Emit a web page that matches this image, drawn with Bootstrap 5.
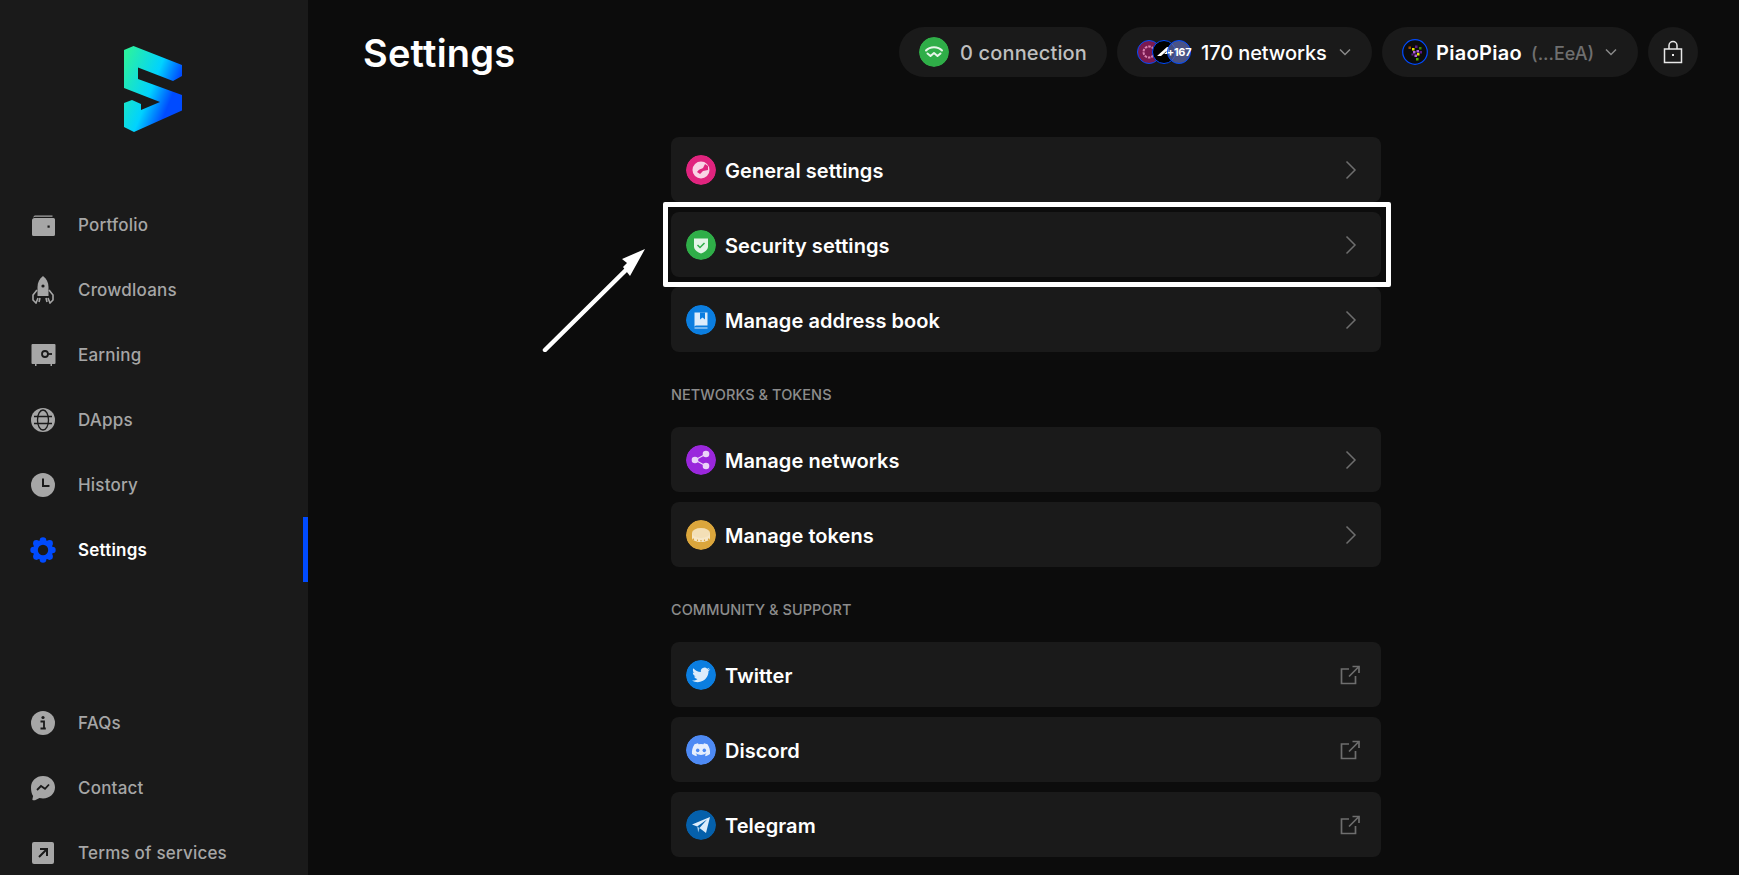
<!DOCTYPE html>
<html lang="en">
<head>
    <meta charset="UTF-8">
    <meta name="viewport" content="width=device-width, initial-scale=1.0">
    <title>Settings</title>

    <!-- Bootstrap CSS -->
    <link href="https://cdn.jsdelivr.net/npm/bootstrap@5.3.0/dist/css/bootstrap.min.css" rel="stylesheet">
    <script src="https://cdn.jsdelivr.net/npm/bootstrap@5.3.0/dist/js/bootstrap.bundle.min.js"></script>

    <style>
        html, body {
            height: 100%;
            overflow: hidden;
        }
        body {
            background-color: #0c0c0c;
            font-family: "Inter", "Noto Sans", sans-serif;
            color: #fff;
        }
        .app-side {
            width: 308px;
            height: 875px;
            flex: none;
            background-color: #1a1a1a;
        }
        .logo-box {
            height: 192px;
            padding: 46px 0 0 124px;
        }
        .side-link {
            height: 65px;
            padding-left: 30px;
            gap: 22px;
            font-size: 17px;
            font-weight: 500;
            letter-spacing: 0.2px;
            color: #a6a6a6;
            text-decoration: none;
        }
        .side-link span {
            padding-top: 2px;
        }
        .side-link.is-active {
            color: #fff;
            font-weight: 600;
            border-right: 5px solid #004bff;
        }
        .side-bottom {
            margin-top: 108px;
        }
        .app-main {
            padding-left: 5px;
            min-width: 0;
        }
        .top-bar {
            padding: 27px 41px 0 50px;
            height: 77px;
        }
        .page-name {
            font-size: 38px;
            font-weight: 600;
            letter-spacing: 0.2px;
            margin: 0;
            padding-top: 4px;
        }
        .stack-10 {
            gap: 10px;
        }
        .pill-btn {
            height: 50px;
            border-radius: 25px;
            background-color: #1a1a1a;
            font-size: 20px;
            font-weight: 500;
            white-space: nowrap;
        }
        .pill-btn span.pill-text {
            padding-top: 2px;
        }
        .pill-conn {
            width: 208px;
            padding-left: 20px;
            gap: 11px;
            color: #bfbfbf;
            letter-spacing: 0.15px;
        }
        .pill-net {
            width: 255px;
            padding-left: 20px;
            letter-spacing: -0.1px;
        }
        .pill-acc {
            width: 256px;
            padding-left: 20px;
            font-weight: 600;
            letter-spacing: 0.3px;
        }
        .pill-lock {
            width: 50px;
            justify-content: center;
        }
        .pill-chev {
            margin-right: 20px;
        }
        .addr-short {
            color: #6f6f6f;
            font-size: 18px;
            font-weight: 500;
            margin-left: 9px;
            padding-top: 2px;
            letter-spacing: 0;
        }
        .net-dot {
            width: 24px;
            height: 24px;
            border-radius: 50%;
            border: 1px solid #004bff;
            flex: none;
            position: relative;
        }
        .net-dot + .net-dot {
            margin-left: -9px;
        }
        .net-one {
            background-color: #7a1a50;
        }
        .net-two {
            background-color: #000;
            z-index: 1;
        }
        .net-more {
            background-color: rgba(96, 108, 180, .7);
            font-size: 11px;
            font-weight: 700;
            letter-spacing: -0.3px;
            color: #fff;
            z-index: 2;
        }
        .net-label {
            margin-left: 10px;
            padding-top: 2px;
        }
        .set-col {
            width: 710px;
            margin-top: 60px;
        }
        .set-row {
            height: 65px;
            padding: 0 24px 0 15px;
            gap: 9px;
            border-radius: 8px;
            background-color: #1a1a1a;
            color: #fff;
            font-size: 20px;
            font-weight: 600;
            letter-spacing: 0.05px;
            text-decoration: none;
        }
        .set-row span {
            padding-top: 2px;
        }
        .set-ico {
            width: 30px;
            height: 30px;
            border-radius: 50%;
            flex: none;
        }
        .ext-ico {
            margin-right: -3px;
        }
        .set-head {
            height: 20px;
            line-height: 20px;
            margin: 33px 0 22px;
            color: #8c8c8c;
            font-size: 14.5px;
            font-weight: 500;
            letter-spacing: 0.05px;
        }
        .mark-frame {
            top: -10px;
            left: -8px;
            right: -10px;
            bottom: -10px;
            border: 5px solid #fff;
            border-radius: 2px;
        }
        .mark-arrow {
            left: -129px;
            top: 35px;
        }
    </style>
</head>
<body>
    <div class="d-flex">
        <!-- Sidebar -->
        <aside class="app-side">
            <div class="logo-box">
                <svg width="58" height="86" viewBox="124 46 58 86">
                    <defs>
                        <linearGradient id="logoGrad" x1="0" y1="0.15" x2="1" y2="0.75">
                            <stop offset="0" stop-color="#2bf2a0"/>
                            <stop offset="0.5" stop-color="#00d2ff"/>
                            <stop offset="0.8" stop-color="#004bff"/>
                        </linearGradient>
                    </defs>
                    <path fill="url(#logoGrad)" d="M124 50L133.5 46L182 65V76L173 81L138 67.5V79L182 95V110.5L134 132L124 127V103L132 100L141 104V110L160 102L124 88Z"/>
                </svg>
            </div>
            <nav class="d-flex flex-column">
                <a class="side-link d-flex align-items-center" href="#">
                    <svg width="26" height="26" viewBox="0 0 26 26"><path fill="#a6a6a6" d="M5 3.500h17.500v1.200H5.500c-1 0-1.800.5-2.200 1.300C3.500 4.600 4 3.500 5 3.500zM4.500 6h19a1.500 1.500 0 0 1 1.500 1.500v15a1.500 1.500 0 0 1-1.500 1.500h-20A1.500 1.500 0 0 1 2 22.500V8.500A2.500 2.500 0 0 1 4.500 6z"/><rect x="17.500" y="13.500" width="2.200" height="2.200" fill="#1a1a1a"/></svg>
                    <span>Portfolio</span>
                </a>
                <a class="side-link d-flex align-items-center" href="#">
                    <svg width="26" height="28" viewBox="0 0 26 28"><path fill="#a6a6a6" d="M13 0c3.500 2.500 5.500 6.500 5.500 11v9h-11v-9C7.500 6.500 9.500 2.500 13 0z"/><circle cx="13" cy="10" r="1.600" fill="#1a1a1a"/><path fill="none" stroke="#a6a6a6" stroke-width="1.600" d="M7 14l-4 5v5l3 3 2-5M19 14l4 5v5l-3 3-2-5M10 22l-1 4M16 22l1 4"/></svg>
                    <span>Crowdloans</span>
                </a>
                <a class="side-link d-flex align-items-center" href="#">
                    <svg width="26" height="26" viewBox="0 0 26 26"><path fill="#a6a6a6" d="M2.500 2h22a1 1 0 0 1 1 1v18a1 1 0 0 1-1 1h-2.500v2h-1.500v-2H6.500v2H5v-2H2.500a1 1 0 0 1-1-1V3a1 1 0 0 1 1-1z"/><circle cx="15" cy="12" r="3" fill="none" stroke="#1a1a1a" stroke-width="1.800"/><path d="M18 12h4" stroke="#1a1a1a" stroke-width="1.800"/></svg>
                    <span>Earning</span>
                </a>
                <a class="side-link d-flex align-items-center" href="#">
                    <svg width="26" height="26" viewBox="0 0 26 26"><circle cx="13" cy="13" r="12" fill="#a6a6a6"/><g fill="none" stroke="#1a1a1a" stroke-width="1.300"><ellipse cx="13" cy="13" rx="5.500" ry="10"/><path d="M4 9.500h18M4 16.500h18"/></g></svg>
                    <span>DApps</span>
                </a>
                <a class="side-link d-flex align-items-center" href="#">
                    <svg width="26" height="26" viewBox="0 0 26 26"><circle cx="13" cy="13" r="12" fill="#a6a6a6"/><path d="M13 6.500V14h6.500" fill="none" stroke="#1a1a1a" stroke-width="2"/></svg>
                    <span>History</span>
                </a>
                <a class="side-link is-active d-flex align-items-center" href="#">
                    <svg width="26" height="26" viewBox="0 0 26 26"><g fill="#004bff"><circle cx="13" cy="13" r="10"/><circle cx="13" cy="3.600" r="3.300"/><circle cx="13" cy="22.400" r="3.300"/><circle cx="3.600" cy="13" r="3.300"/><circle cx="22.400" cy="13" r="3.300"/><circle cx="6.400" cy="6.400" r="3.300"/><circle cx="19.600" cy="6.400" r="3.300"/><circle cx="6.400" cy="19.600" r="3.300"/><circle cx="19.600" cy="19.600" r="3.300"/></g><circle cx="13" cy="13" r="5.200" fill="#1a1a1a"/></svg>
                    <span>Settings</span>
                </a>
            </nav>
            <nav class="side-bottom d-flex flex-column">
                <a class="side-link d-flex align-items-center" href="#">
                    <svg width="26" height="26" viewBox="0 0 26 26"><circle cx="13" cy="13" r="12" fill="#a6a6a6"/><circle cx="13" cy="7.500" r="1.600" fill="#1a1a1a"/><path d="M10.500 11.500H14v7h1.800M10.500 18.500H14" fill="none" stroke="#1a1a1a" stroke-width="1.800"/></svg>
                    <span>FAQs</span>
                </a>
                <a class="side-link d-flex align-items-center" href="#">
                    <svg width="26" height="26" viewBox="0 0 26 26"><path fill="#a6a6a6" d="M13 1c6.900 0 12 4.900 12 11.300S19.900 23.500 13 23.500c-1.200 0-2.400-.2-3.500-.5L5 25.200c-2 .5-3-.2-2.500-1.500l.6-2.700C1.500 19 1 15.500 1 12.300 1 5.900 6.100 1 13 1z"/><path d="M7 15l4-4 4 2.800 4-4.300" fill="none" stroke="#1a1a1a" stroke-width="1.800"/></svg>
                    <span>Contact</span>
                </a>
                <a class="side-link d-flex align-items-center" href="#">
                    <svg width="26" height="26" viewBox="0 0 26 26"><rect x="2" y="2" width="22" height="22" rx="2" fill="#a6a6a6"/><path d="M9 17l7.500-7.500M10 9h7v7" fill="none" stroke="#1a1a1a" stroke-width="2"/></svg>
                    <span>Terms of services</span>
                </a>
            </nav>
        </aside>

        <!-- Main -->
        <main class="app-main flex-grow-1">
            <header class="top-bar d-flex justify-content-between align-items-center">
                <h1 class="page-name">Settings</h1>
                <div class="d-flex stack-10">
                    <div class="pill-btn pill-conn d-flex align-items-center">
                        <svg class="set-ico" viewBox="0 0 30 30"><circle cx="15" cy="15" r="15" fill="#2fae48"/><path d="M7 13.500c4-4.500 12-4.500 16 0M8.500 16.500l3 2.500 3.500-3 3.500 3 3-2.500" fill="none" stroke="#e6f6e9" stroke-width="2" stroke-linecap="round" stroke-linejoin="round"/></svg>
                        <span class="pill-text">0 connection</span>
                    </div>
                    <div class="pill-btn pill-net d-flex align-items-center">
                        <span class="net-dot net-one d-flex align-items-center justify-content-center">
                            <svg width="16" height="16" viewBox="0 0 16 16"><circle cx="8" cy="8" r="5.500" fill="none" stroke="#d982b0" stroke-width="2" stroke-dasharray="2.500 1"/></svg>
                        </span>
                        <span class="net-dot net-two d-flex align-items-center justify-content-center">
                            <svg width="16" height="12" viewBox="0 0 16 12"><path fill="#fff" d="M1 10L11 1h2v7H8l3-2.500H10L5 10z"/></svg>
                        </span>
                        <span class="net-dot net-more d-flex align-items-center justify-content-center">+167</span>
                        <span class="net-label">170 networks</span>
                        <svg class="ms-auto pill-chev" width="14" height="10" viewBox="0 0 14 10"><path d="M2 2.500l5 5 5-5" fill="none" stroke="#8a8a8a" stroke-width="1.500"/></svg>
                    </div>
                    <div class="pill-btn pill-acc d-flex align-items-center">
                        <svg width="26" height="26" viewBox="0 0 26 26"><circle cx="13" cy="13" r="12.300" fill="#0c0c0c" stroke="#004bff" stroke-width="1.200"/><g><rect x="6.500" y="7.500" width="2.500" height="2.500" fill="#a04a00"/><rect x="10" y="9" width="2.500" height="2.500" fill="#e6e600"/><rect x="13" y="6.500" width="2.500" height="2.500" fill="#5a1a8a"/><rect x="17" y="8" width="2.500" height="2.500" fill="#3a8a00"/><rect x="11" y="12" width="2.500" height="2.500" fill="#b060e0"/><rect x="14.500" y="11" width="2.500" height="2.500" fill="#b060e0"/><rect x="15" y="14" width="2.500" height="2.500" fill="#e6e600"/><rect x="12.500" y="15.500" width="2.500" height="2.500" fill="#b060e0"/><rect x="9.500" y="14.500" width="2" height="2" fill="#5a1a8a"/><rect x="17.500" y="12" width="2.500" height="2.500" fill="#5a1a8a"/><rect x="14" y="19" width="2.500" height="2.500" fill="#4ca800"/></g></svg>
                        <span class="ms-2 pill-text">PiaoPiao</span>
                        <span class="addr-short">(...EeA)</span>
                        <svg class="ms-auto pill-chev" width="14" height="10" viewBox="0 0 14 10"><path d="M2 2.500l5 5 5-5" fill="none" stroke="#8a8a8a" stroke-width="1.500"/></svg>
                    </div>
                    <div class="pill-btn pill-lock d-flex align-items-center">
                        <svg width="22" height="24" viewBox="0 0 22 24"><path d="M2.500 9h17v13.500h-17zM7 9V5.500a4 4 0 0 1 8 0V9" fill="none" stroke="#e8e8e8" stroke-width="1.500"/><rect x="10" y="14" width="2" height="2" fill="#e8e8e8"/></svg>
                    </div>
                </div>
            </header>

            <div class="set-col mx-auto">
                <div class="d-flex flex-column stack-10">
                    <a class="set-row d-flex align-items-center" href="#">
                        <svg class="set-ico" viewBox="0 0 30 30"><circle cx="15" cy="15" r="15" fill="#e0247e"/><circle cx="15" cy="15" r="8.500" fill="#f9d3e5"/><path d="M11 17c2-3 4-3 6-4l2-4 3 2v4l-5 1-3 3z" fill="#e0247e"/></svg>
                        <span>General settings</span>
                        <svg class="ms-auto" width="12" height="20" viewBox="0 0 12 20"><path d="M1.500 1.500L10 10l-8.500 8.500" fill="none" stroke="#6e6e6e" stroke-width="1.500"/></svg>
                    </a>
                    <div class="position-relative">
                        <a class="set-row d-flex align-items-center" href="#">
                            <svg class="set-ico" viewBox="0 0 30 30"><circle cx="15" cy="15" r="15" fill="#2fae48"/><path d="M8 8.500h14v8c0 3.500-4 6-7 7-3-1-7-3.500-7-7z" fill="#e3f5e7"/><path d="M11.500 15l2.500 2.500 4.500-4.500" fill="none" stroke="#2fae48" stroke-width="1.500"/></svg>
                            <span>Security settings</span>
                            <svg class="ms-auto" width="12" height="20" viewBox="0 0 12 20"><path d="M1.500 1.500L10 10l-8.500 8.500" fill="none" stroke="#6e6e6e" stroke-width="1.500"/></svg>
                        </a>
                        <span class="mark-frame position-absolute"></span>
                        <svg class="mark-arrow position-absolute" width="105" height="105" viewBox="0 0 105 105"><path d="M3 103L87 20" stroke="#fff" stroke-width="4.500" stroke-linecap="round"/><path d="M103 2L80 12l5 4-4 4 7 9z" fill="#fff"/></svg>
                    </div>
                    <a class="set-row d-flex align-items-center" href="#">
                        <svg class="set-ico" viewBox="0 0 30 30"><circle cx="15" cy="15" r="15" fill="#0b7ee0"/><path d="M8.500 7.500h13v13H10A1.500 1.500 0 0 0 8.500 22z" fill="#dcecfb"/><path d="M14 7.500h5v7l-2.500-2-2.500 2z" fill="#0b7ee0"/><path d="M8.500 23h13" stroke="#dcecfb" stroke-width="1.200"/></svg>
                        <span>Manage address book</span>
                        <svg class="ms-auto" width="12" height="20" viewBox="0 0 12 20"><path d="M1.500 1.500L10 10l-8.500 8.500" fill="none" stroke="#6e6e6e" stroke-width="1.500"/></svg>
                    </a>
                </div>

                <div class="set-head">NETWORKS &amp; TOKENS</div>
                <div class="d-flex flex-column stack-10">
                    <a class="set-row d-flex align-items-center" href="#">
                        <svg class="set-ico" viewBox="0 0 30 30"><circle cx="15" cy="15" r="15" fill="#9a27dc"/><g fill="#ead3f8"><circle cx="20" cy="9" r="3.300"/><circle cx="9" cy="15" r="3.300"/><circle cx="20" cy="21" r="3.300"/></g><path d="M20 9L9 15l11 6" fill="none" stroke="#ead3f8" stroke-width="1.200"/></svg>
                        <span>Manage networks</span>
                        <svg class="ms-auto" width="12" height="20" viewBox="0 0 12 20"><path d="M1.500 1.500L10 10l-8.500 8.500" fill="none" stroke="#6e6e6e" stroke-width="1.500"/></svg>
                    </a>
                    <a class="set-row d-flex align-items-center" href="#">
                        <svg class="set-ico" viewBox="0 0 30 30"><circle cx="15" cy="15" r="15" fill="#dba63c"/><path d="M6 13v5c0 2.200 4 4 9 4s9-1.800 9-4v-5z" fill="#f6e6c6"/><ellipse cx="15" cy="13" rx="9" ry="5" fill="#f3dfb6"/><path d="M7.500 18.500v1.500M11.500 19.500v1.500M15 20v1.500M18.500 19.500v1.500M22.500 18.500v1.500" stroke="#dba63c" stroke-width="1.100"/></svg>
                        <span>Manage tokens</span>
                        <svg class="ms-auto" width="12" height="20" viewBox="0 0 12 20"><path d="M1.500 1.500L10 10l-8.500 8.500" fill="none" stroke="#6e6e6e" stroke-width="1.500"/></svg>
                    </a>
                </div>

                <div class="set-head">COMMUNITY &amp; SUPPORT</div>
                <div class="d-flex flex-column stack-10">
                    <a class="set-row d-flex align-items-center" href="#">
                        <svg class="set-ico" viewBox="0 0 30 30"><circle cx="15" cy="15" r="15" fill="#0b7ee0"/><path fill="#dcecfb" d="M24 9.200c-.7.300-1.400.5-2.100.6.800-.5 1.300-1.200 1.600-2-.7.400-1.500.7-2.300.9a3.700 3.700 0 0 0-6.300 3.400c-3-.2-5.700-1.600-7.500-3.900-1 1.700-.5 3.800 1.100 4.900-.6 0-1.200-.2-1.700-.5 0 1.800 1.300 3.300 3 3.700-.5.100-1.100.2-1.700.1.500 1.500 1.900 2.500 3.400 2.600-1.500 1.200-3.500 1.700-5.400 1.500 1.700 1.100 3.700 1.700 5.700 1.700 7 0 10.900-5.900 10.700-11.100.7-.5 1.300-1.200 1.800-1.900z"/></svg>
                        <span>Twitter</span>
                        <svg class="ms-auto ext-ico" width="20" height="20" viewBox="0 0 20 20"><path d="M9 4H1.500v14.500H15.500V11" fill="none" stroke="#6e6e6e" stroke-width="1.700"/><path d="M9 11.500L18 2.500M12.500 1.500h6.500v6.500" fill="none" stroke="#6e6e6e" stroke-width="1.700"/></svg>
                    </a>
                    <a class="set-row d-flex align-items-center" href="#">
                        <svg class="set-ico" viewBox="0 0 30 30"><circle cx="15" cy="15" r="15" fill="#4e8af4"/><path fill="#e6eefd" d="M21.500 9.300A14 14 0 0 0 18 8.200l-.5 1a13 13 0 0 0-5 0l-.5-1a14 14 0 0 0-3.500 1.100C6.300 12.600 5.700 15.800 6 19a14 14 0 0 0 4.300 2.200l.9-1.500-1.600-.8.400-.3a10 10 0 0 0 10 0l.4.300-1.600.8.900 1.500A14 14 0 0 0 24 19c.4-3.700-.6-6.900-2.500-9.700z"/><ellipse cx="11.700" cy="15.300" rx="1.700" ry="1.900" fill="#4e8af4"/><ellipse cx="18.300" cy="15.300" rx="1.700" ry="1.900" fill="#4e8af4"/></svg>
                        <span>Discord</span>
                        <svg class="ms-auto ext-ico" width="20" height="20" viewBox="0 0 20 20"><path d="M9 4H1.500v14.500H15.500V11" fill="none" stroke="#6e6e6e" stroke-width="1.700"/><path d="M9 11.500L18 2.500M12.500 1.500h6.500v6.500" fill="none" stroke="#6e6e6e" stroke-width="1.700"/></svg>
                    </a>
                    <a class="set-row d-flex align-items-center" href="#">
                        <svg class="set-ico" viewBox="0 0 30 30"><circle cx="15" cy="15" r="15" fill="#0560ab"/><path fill="#dcecfb" d="M24 7L6 14.500l5.200 2L21 9.500l-7.500 8.600 6.500 5z"/><path fill="#a8cdec" d="M11.200 16.500l1 6 1.300-4.400z"/></svg>
                        <span>Telegram</span>
                        <svg class="ms-auto ext-ico" width="20" height="20" viewBox="0 0 20 20"><path d="M9 4H1.500v14.500H15.500V11" fill="none" stroke="#6e6e6e" stroke-width="1.700"/><path d="M9 11.500L18 2.500M12.500 1.500h6.500v6.500" fill="none" stroke="#6e6e6e" stroke-width="1.700"/></svg>
                    </a>
                </div>
            </div>
        </main>
    </div>
</body>
</html>
